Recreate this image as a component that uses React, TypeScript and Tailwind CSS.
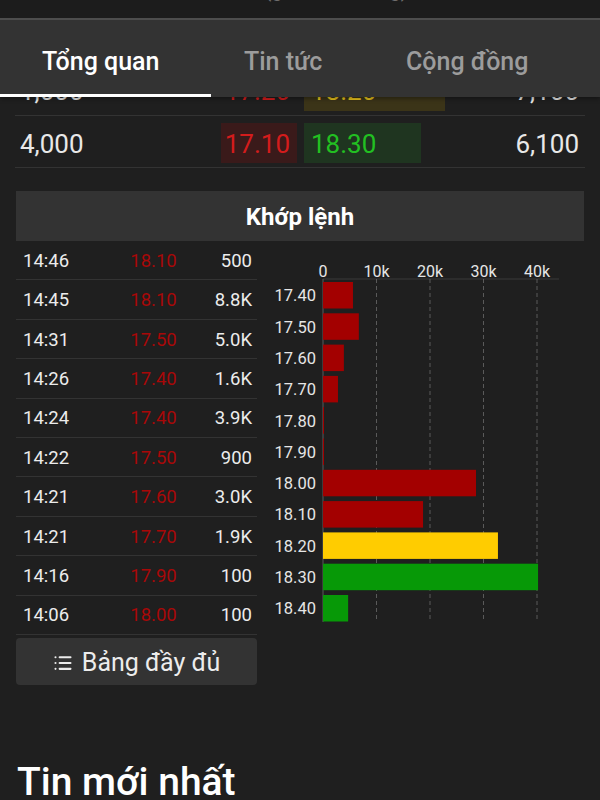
import React from "react";
import { List } from "lucide-react";

const trades = [
  { time: "14:46", price: "18.10", vol: "500" },
  { time: "14:45", price: "18.10", vol: "8.8K" },
  { time: "14:31", price: "17.50", vol: "5.0K" },
  { time: "14:26", price: "17.40", vol: "1.6K" },
  { time: "14:24", price: "17.40", vol: "3.9K" },
  { time: "14:22", price: "17.50", vol: "900" },
  { time: "14:21", price: "17.60", vol: "3.0K" },
  { time: "14:21", price: "17.70", vol: "1.9K" },
  { time: "14:16", price: "17.90", vol: "100" },
  { time: "14:06", price: "18.00", vol: "100" },
];

// volume in k at each price level
const levels = [
  { price: "17.40", vol: 5.6, color: "#a30000" },
  { price: "17.50", vol: 6.7, color: "#a30000" },
  { price: "17.60", vol: 3.9, color: "#a30000" },
  { price: "17.70", vol: 2.8, color: "#a30000" },
  { price: "17.80", vol: 0.15, color: "#a30000" },
  { price: "17.90", vol: 0.15, color: "#a30000" },
  { price: "18.00", vol: 28.6, color: "#a30000" },
  { price: "18.10", vol: 18.7, color: "#a30000" },
  { price: "18.20", vol: 32.7, color: "#ffcc00" },
  { price: "18.30", vol: 40.2, color: "#079907" },
  { price: "18.40", vol: 4.7, color: "#079907" },
];

function VolumeChart() {
  const x0 = 66;
  const perK = 5.35;
  return (
    <svg width="327" height="394" className="block">
      <line x1={x0} y1={38} x2={302} y2={38} stroke="#3a3a3a" strokeWidth="1" />
      {[0, 10, 20, 30, 40].map((k) => (
        <g key={k}>
          <text
            x={x0 + k * perK}
            y={36}
            textAnchor="middle"
            fill="#e6e6e6"
            fontSize="16"
            fontFamily="Roboto, sans-serif"
          >
            {k === 0 ? "0" : `${k}k`}
          </text>
          {k > 0 && (
            <line
              x1={x0 + k * perK}
              y1={38}
              x2={x0 + k * perK}
              y2={381}
              stroke="#5a5a5a"
              strokeWidth="1"
              strokeDasharray="4 3"
            />
          )}
        </g>
      ))}
      <line x1={x0} y1={38} x2={x0} y2={381} stroke="#5a5a5a" strokeWidth="1" />
      {levels.map((l, i) => {
        const top = 41 + i * 31.3;
        return (
          <g key={l.price}>
            <text
              x={59}
              y={top + 13.3 + 6}
              textAnchor="end"
              fill="#e6e6e6"
              fontSize="16.5"
              fontFamily="Roboto, sans-serif"
            >
              {l.price}
            </text>
            <rect x={x0} y={top} width={Math.max(1, l.vol * perK)} height={26.5} fill={l.color} />
          </g>
        );
      })}
    </svg>
  );
}

export default function App() {
  return (
    <div className="relative w-[600px] h-[800px] overflow-hidden bg-[#1f1f1f] font-['Roboto',sans-serif] text-[#e8e8e8]">
      {/* app bar + tabs, lying over the scrolled content */}
      <div className="absolute top-0 inset-x-0 z-10 shadow-[0_2px_4px_rgba(0,0,0,0.35)]">
        <div className="h-[18px] overflow-hidden bg-[#1c1c1c]">
          <p className="-mt-[25px] text-center text-[20px] leading-[30px] text-[#6d6d6d]">
            Biểu đồ (giá, khối lượng)
          </p>
        </div>
        <div className="h-[2px] bg-[#4d4d4d]" />
        <div className="relative flex h-[77px] items-center bg-[#333333] pt-[6px] text-[25px] font-medium">
          <div className="w-[211px] pl-[42px] text-white">Tổng quan</div>
          <div className="w-[150px] pl-[33px] text-[#9c9c9c]">Tin tức</div>
          <div className="pl-[45px] text-[#9c9c9c]">Cộng đồng</div>
          <div className="absolute bottom-0 left-0 h-[3px] w-[211px] bg-white" />
        </div>
      </div>

      <div className="pt-[64px]">
        <div className="mx-[15px]">
          <div className="flex h-[52px] items-center border-b border-[#333] pt-[3px] text-[26px]">
            <div className="w-[200px] pl-[5px]">1,000</div>
            <div className="ml-[6px] flex h-[40px] w-[76px] items-center justify-end pr-[7px] text-[#d41c1c]">
              17.20
            </div>
            <div className="ml-[7px] flex h-[40px] w-[141px] items-center bg-[#3b3418] pl-[7px] text-[#e8c21c]">
              18.20
            </div>
            <div className="flex-1 pr-[6px] text-right">7,100</div>
          </div>
          <div className="flex h-[52px] items-center border-b border-[#333] text-[26px]">
            <div className="w-[200px] pl-[5px] pt-[5px]">4,000</div>
            <div className="ml-[6px] mt-[2px] flex h-[40px] w-[76px] items-center justify-end bg-[#3a1a1a] pr-[7px] pt-[3px] text-[#d41c1c]">
              17.10
            </div>
            <div className="ml-[7px] mt-[2px] flex h-[40px] w-[117px] items-center bg-[#1f3520] pl-[7px] pt-[3px] text-[#22c022]">
              18.30
            </div>
            <div className="flex-1 pr-[6px] pt-[5px] text-right">6,100</div>
          </div>
        </div>

        <div className="mx-[16px] mt-[23px] flex h-[50px] items-center justify-center bg-[#333333] pt-[2px] text-[24px] font-bold text-white">
          Khớp lệnh
        </div>

        <div className="mx-[16px] flex">
          <div className="w-[242px]">
            {trades.map((t, i) => (
              <div key={i} className="flex h-[39.4px] items-center border-b border-[#333] pt-[3px] text-[18.5px]">
                <div className="w-[100px] pl-[7px] text-[#ececec]">{t.time}</div>
                <div className="w-[75px] text-center text-[#a80808]">{t.price}</div>
                <div className="flex-1 pr-[5px] text-right text-[#ececec]">{t.vol}</div>
              </div>
            ))}
            <button className="mt-[3px] flex h-[47px] w-full items-center justify-center gap-[9px] rounded-[4px] bg-[#333333] pt-[3px] text-[25px] text-[#ececec]">
              <List size={20} strokeWidth={2.5} />
              Bảng đầy đủ
            </button>
          </div>
          <div className="flex-1">
            <VolumeChart />
          </div>
        </div>

        <h2 className="mx-[17px] mt-[77px] text-[39px] font-medium leading-[40px] text-white">
          Tin mới nhất
        </h2>
      </div>
    </div>
  );
}
